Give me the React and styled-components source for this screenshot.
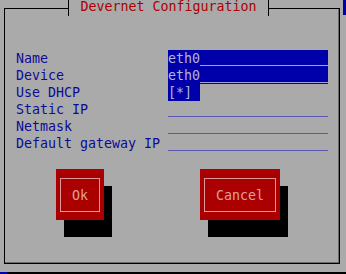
import React from "react";
import styled, { createGlobalStyle } from "styled-components";

const Global = createGlobalStyle`
  html, body { margin: 0; padding: 0; background: #aaaaaa; }
  body { font-family: "DejaVu Sans Mono", "Liberation Mono", monospace; }
`;

const Screen = styled.div`
  width: 346px;
  height: 274px;
  overflow: hidden;
  background: #aaaaaa;
  display: flex;
  flex-direction: column;
`;

const Top = styled.div`
  display: flex;
  height: 272px;
`;

const Main = styled.div`
  width: 343px;
  padding: 8px 0 0 4px;
  box-sizing: border-box;
`;

const Edge = styled.div`
  width: 3px;
  display: flex;
  flex-direction: column;
`;

const EdgeBlue = styled.div`
  height: 15px;
  background: #0000aa;
`;

const BottomBar = styled.div`
  height: 2px;
  background: #000;
  display: flex;
`;

const BottomBlue = styled.div`
  width: 7px;
  background: #0000aa;
`;

const Frame = styled.div`
  position: relative;
  width: 336px;
  height: 256px;
  box-sizing: border-box;
  border: 1px solid #000;
  box-shadow: inset -1px -1px 0 #6a6a6a;
  padding: 41px 0 0 11px;
  font-size: 13.3px;
`;

const Title = styled.div`
  position: absolute;
  left: 63px;
  top: -9px;
  width: 201px;
  height: 16px;
  box-sizing: border-box;
  border-left: 1px solid #000;
  border-right: 1px solid #000;
  background: #aaaaaa;
  color: #aa0000;
  text-align: center;
  line-height: 13px;
  white-space: pre;
`;

const Form = styled.div`
  display: grid;
  grid-template-columns: 152px 160px;
  grid-auto-rows: 17px;
`;

const Label = styled.div`
  color: #0c0c96;
  line-height: 17px;
  white-space: pre;
`;

const Field = styled.div`
  display: flex;
  height: 17px;
  width: ${(p) => (p.$short ? "32px" : "160px")};
  background: ${(p) => (p.$filled ? "#0000aa" : "transparent")};
`;

const Value = styled.span`
  color: #b4b4dc;
  line-height: 17px;
  white-space: pre;
`;

const Fill = styled.span`
  flex: 1;
  align-self: flex-start;
  height: 15px;
  border-bottom: 1px solid ${(p) => (p.$onBlue ? "#a4a4d8" : "#5858b0")};
`;

const ButtonRow = styled.div`
  display: flex;
  gap: 96px;
  margin-top: 17px;
  padding-left: 40px;
`;

const Button = styled.div`
  width: ${(p) => p.$w}px;
  height: 51px;
  box-sizing: border-box;
  background: #aa0000;
  box-shadow: 8px 17px 0 #000;
  padding: 9px 4px 8px 4px;
  display: flex;
`;

const ButtonInner = styled.div`
  flex: 1;
  border: 1px solid #dc9a9a;
  color: #dca0a0;
  display: flex;
  align-items: center;
  justify-content: center;
  line-height: 17px;
`;

const rows = [
  { label: "Name", value: "eth0", filled: true },
  { label: "Device", value: "eth0", filled: true },
  { label: "Use DHCP", value: "[*]", filled: true, short: true },
  { label: "Static IP", value: "" },
  { label: "Netmask", value: "" },
  { label: "Default gateway IP", value: "" },
];

export default function App() {
  return (
    <>
      <Global />
      <Screen>
        <Top>
          <Main>
            <Frame>
              <Title>Devernet Configuration</Title>
              <Form>
                {rows.map((r) => (
                  <React.Fragment key={r.label}>
                    <Label>{r.label}</Label>
                    <Field $filled={r.filled} $short={r.short}>
                      {r.value && <Value>{r.value}</Value>}
                      {!r.short && <Fill $onBlue={r.filled} />}
                    </Field>
                  </React.Fragment>
                ))}
              </Form>
              <ButtonRow>
                <Button $w={48}>
                  <ButtonInner>Ok</ButtonInner>
                </Button>
                <Button $w={80}>
                  <ButtonInner>Cancel</ButtonInner>
                </Button>
              </ButtonRow>
            </Frame>
          </Main>
          <Edge>
            <EdgeBlue />
          </Edge>
        </Top>
        <BottomBar>
          <BottomBlue />
        </BottomBar>
      </Screen>
    </>
  );
}
